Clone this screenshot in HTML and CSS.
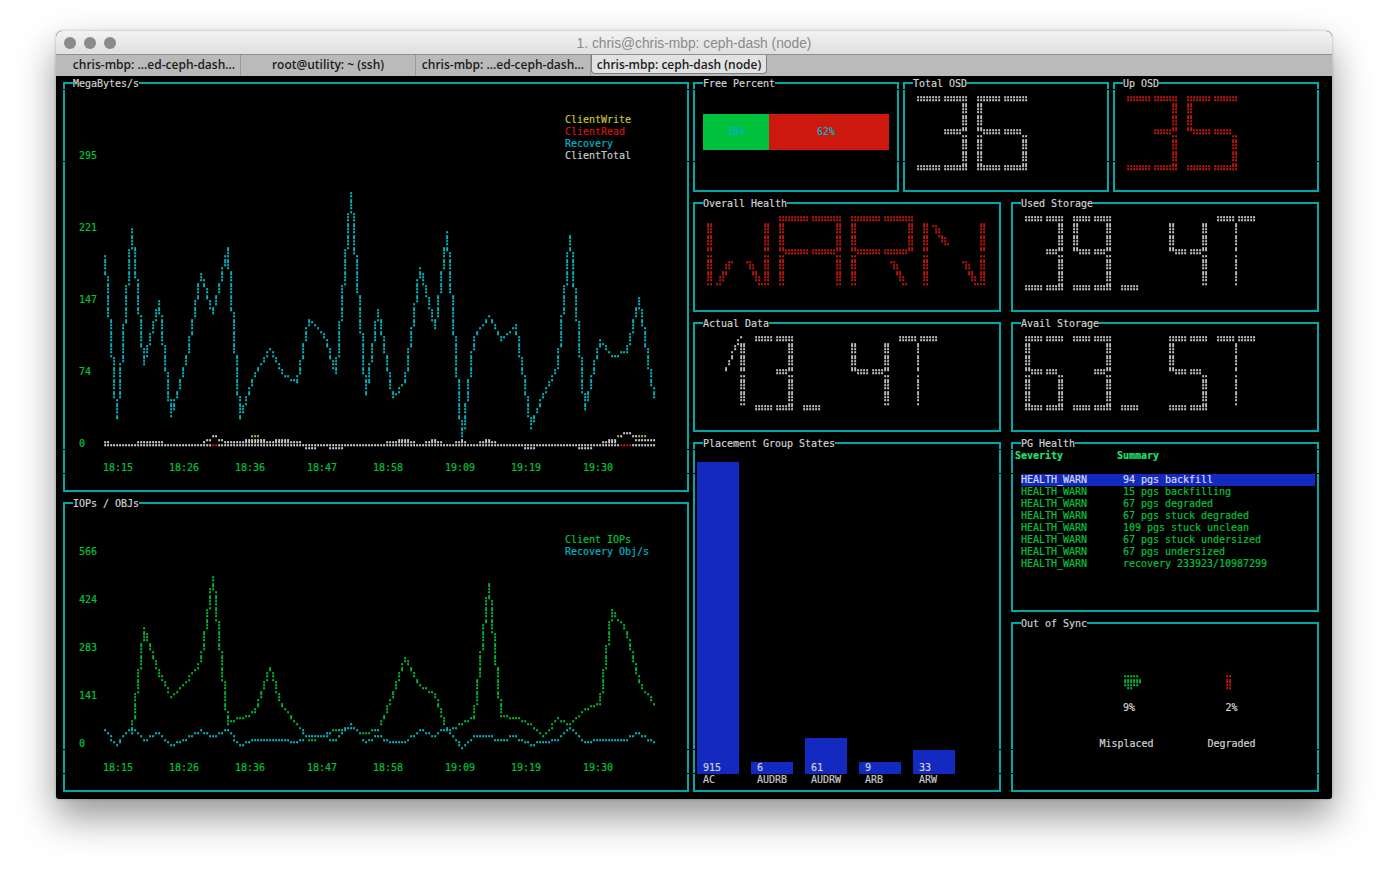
FILE: index.html
```html
<!DOCTYPE html>
<html lang="en">
<head>
  <meta charset="UTF-8" />
  <title>ceph-dash (node)</title>
  <link rel="stylesheet" href="styles.css">
</head>
<body>
  <div class="window">
    <header class="titlebar">
      <div class="lights"><i></i><i></i><i></i></div>
      <div class="title">1. chris@chris-mbp: ceph-dash (node)</div>
    </header>
    <nav class="tabs">
      <div class="tab">chris-mbp: ...ed-ceph-dash...</div>
      <div class="tab">root@utility: ~ (ssh)</div>
      <div class="tab">chris-mbp: ...ed-ceph-dash...</div>
      <div class="tab active">chris-mbp: ceph-dash (node)</div>
    </nav>

    <!-- terminal: 210 x 60 cells of 6 x 12 px -->
    <main class="term">
      <div class="seams"><i class="s1"></i><i class="s2"></i><i class="s3"></i><i class="s4"></i><i class="s5"></i><i class="s6"></i></div>

      <section class="panel p-mb">
        <h2>MegaBytes/s</h2>
        <div class="chart">
          <div class="yaxis y-mb"><span>295</span><span>221</span><span>147</span><span>74</span><span>0</span></div>
          <div class="plot">
            <ul class="legend">
              <li class="yellow">ClientWrite</li>
              <li class="red">ClientRead</li>
              <li class="cyan">Recovery</li>
              <li class="white">ClientTotal</li>
            </ul>
            <pre class="dots plot-mb" id="mb"></pre>
          </div>
        </div>
        <pre class="xaxis">18:15      18:26      18:36       18:47      18:58       19:09      19:19       19:30</pre>
      </section>

      <section class="panel p-iops">
        <h2>IOPs / OBJs</h2>
        <div class="chart">
          <div class="yaxis y-iops"><span>566</span><span>424</span><span>283</span><span>141</span><span>0</span></div>
          <div class="plot">
            <ul class="legend">
              <li class="green">Client IOPs</li>
              <li class="cyan">Recovery Obj/s</li>
            </ul>
            <pre class="dots plot-iops" id="iops"></pre>
          </div>
        </div>
        <pre class="xaxis">18:15      18:26      18:36       18:47      18:58       19:09      19:19       19:30</pre>
      </section>

      <section class="panel p-free">
        <h2>Free Percent</h2>
        <div class="stack">
          <div class="seg seg-free">38%</div>
          <div class="seg seg-used">62%</div>
        </div>
      </section>

      <section class="panel p-total">
        <h2>Total OSD</h2>
        <pre class="dots lcd white" id="lcd-total" aria-label="36"></pre>
      </section>

      <section class="panel p-up">
        <h2>Up OSD</h2>
        <pre class="dots lcd red" id="lcd-up" aria-label="35"></pre>
      </section>

      <section class="panel p-health">
        <h2>Overall Health</h2>
        <pre class="dots lcd red" id="lcd-health" aria-label="WARN"></pre>
      </section>

      <section class="panel p-used">
        <h2>Used Storage</h2>
        <pre class="dots lcd white" id="lcd-used" aria-label="39.4T"></pre>
      </section>

      <section class="panel p-actual">
        <h2>Actual Data</h2>
        <pre class="dots lcd white" id="lcd-actual" aria-label="13.4T"></pre>
      </section>

      <section class="panel p-avail">
        <h2>Avail Storage</h2>
        <pre class="dots lcd white" id="lcd-avail" aria-label="63.5T"></pre>
      </section>

      <section class="panel p-pg">
        <h2>Placement Group States</h2>
        <div class="bars">
          <div class="bar-col"><div class="bar" style="height:312px">915</div><div class="bar-label">AC</div></div>
          <div class="bar-col"><div class="bar" style="height:12px">6</div><div class="bar-label">AUDRB</div></div>
          <div class="bar-col"><div class="bar" style="height:36px">61</div><div class="bar-label">AUDRW</div></div>
          <div class="bar-col"><div class="bar" style="height:12px">9</div><div class="bar-label">ARB</div></div>
          <div class="bar-col"><div class="bar" style="height:24px">33</div><div class="bar-label">ARW</div></div>
        </div>
      </section>

      <section class="panel p-table">
        <h2>PG Health</h2>
        <div class="thead"><span>Severity</span><span>Summary</span></div>
        <ul class="rows">
          <li class="selected"><span>HEALTH_WARN</span><span>94 pgs backfill</span></li>
          <li><span>HEALTH_WARN</span><span>15 pgs backfilling</span></li>
          <li><span>HEALTH_WARN</span><span>67 pgs degraded</span></li>
          <li><span>HEALTH_WARN</span><span>67 pgs stuck degraded</span></li>
          <li><span>HEALTH_WARN</span><span>109 pgs stuck unclean</span></li>
          <li><span>HEALTH_WARN</span><span>67 pgs stuck undersized</span></li>
          <li><span>HEALTH_WARN</span><span>67 pgs undersized</span></li>
          <li><span>HEALTH_WARN</span><span>recovery 233923/10987299</span></li>
        </ul>
      </section>

      <section class="panel p-sync">
        <h2>Out of Sync</h2>
        <div class="gauges">
          <div class="gauge">
            <pre class="dots blob blob-mis" id="blob-mis"></pre>
            <div class="pct pct-mis">9%</div>
            <div class="gauge-name">Misplaced</div>
          </div>
          <div class="gauge">
            <pre class="dots blob blob-deg" id="blob-deg"></pre>
            <div class="pct">2%</div>
            <div class="gauge-name">Degraded</div>
          </div>
        </div>
      </section>
    </main>
  </div>
  <script src="dash.js"></script>
</body>
</html>
```

FILE: styles.css
```css
/* ─── page & window ─────────────────────────── */
*,*::before,*::after{box-sizing:border-box;margin:0;padding:0}
html,body{width:100%;height:100%;overflow:hidden;background:#fff}
body{padding:31px 56px 0}

.window{
  width:1276px;height:768px;border-radius:6px 6px 3px 3px;overflow:hidden;
  box-shadow:0 18px 38px rgba(0,0,0,.42),0 0 3px rgba(0,0,0,.25);
  display:flex;flex-direction:column;background:#000;
}

.titlebar{
  height:23px;flex:none;display:flex;align-items:center;position:relative;
  background:linear-gradient(#f3f3f3,#dfdfdf);
}
.lights{display:flex;gap:8px;padding-left:8px}
.lights i{width:12px;height:12px;border-radius:50%;background:#8b8b8b}
.title{
  position:absolute;left:0;right:0;padding-top:1px;text-align:center;
  font:13.8px "Liberation Sans",Arial,sans-serif;color:#8a8a8a;
}

.tabs{
  height:22px;flex:none;display:flex;background:#bababa;
  border-top:1px solid #8f8f8f;
  font:600 12px "Open Sans","Liberation Sans",sans-serif;color:#1c1c1c;
}
.tab{
  width:175px;padding-bottom:2px;display:flex;align-items:center;justify-content:center;
  border-right:1px solid #9b9b9b;white-space:nowrap;
}
.tab:first-child{width:185px;padding-left:12px}
.tab.active{
  background:#e2e2e2;border:1px solid #7e7e7e;border-top:0;
  border-radius:0 0 4px 4px;height:19px;width:176px;padding-bottom:0;
}

/* ─── terminal grid ─────────────────────────── */
.term{
  flex:1;position:relative;padding:2px 0 0 5px;
  display:grid;grid-template-columns:repeat(210,6px);grid-template-rows:repeat(60,12px);
  font:10px/12px "DejaVu Sans Mono","Liberation Mono",monospace;letter-spacing:-.02px;
  color:#c7c7c7;-webkit-text-stroke:.2px;
}
.term pre{font:inherit;letter-spacing:inherit}

/* the box drawing glyphs don't quite join on a few rows */
.seams i{position:absolute;left:0;right:0;height:1px;background:#000;z-index:1}
.seams .s1{top:13px}
.seams .s2{top:85px}
.seams .s3{top:373px}
.seams .s4{top:397px}
.seams .s5{top:673px}
.seams .s6{top:697px}

.panel{
  position:relative;margin:4px 2px 6px;padding:6px 2px 4px;
  border:2px solid #00a8a8;
}
.panel > *{position:relative;z-index:2}
.panel h2{
  position:absolute;left:8px;top:-6px;height:12px;background:#000;
  font:inherit;color:#d0d0d0;white-space:nowrap;
}

.p-mb{grid-column:1/106;grid-row:1/36}
.p-iops{grid-column:1/106;grid-row:36/61}
.p-free{grid-column:106/141;grid-row:1/11}
.p-total{grid-column:141/176;grid-row:1/11}
.p-up{grid-column:176/211;grid-row:1/11}
.p-health{grid-column:106/158;grid-row:11/21}
.p-used{grid-column:159/211;grid-row:11/21}
.p-actual{grid-column:106/158;grid-row:21/31}
.p-avail{grid-column:159/211;grid-row:21/31}
.p-pg{grid-column:106/158;grid-row:31/61}
.p-table{grid-column:159/211;grid-row:31/46}
.p-sync{grid-column:159/211;grid-row:46/61}

/* ─── colours ───────────────────────────────── */
.white{color:#c7c7c7}
.red{color:#cc180e}
.green{color:#00c13b}
.yellow{color:#c7c42a}
.cyan{color:#00b4c4}

/* braille comes from a fallback font with a 7px advance;
   own layer so the dots get grey antialiasing, no colour fringes */
.term pre.dots{
  white-space:pre;line-height:12px;letter-spacing:-1px;
  -webkit-text-stroke:.35px;will-change:transform;
}
.dots .white{color:#d4d4d4}
.dots .cyan{color:#00c0c6}

/* ─── line charts ───────────────────────────── */
.chart{display:flex}
.yaxis{width:36px;padding-left:12px;display:flex;flex-direction:column;color:#00c13b}
.yaxis span{height:12px}
.y-mb{padding-top:60px;gap:60px}
.y-iops{padding-top:36px;gap:36px}
.plot-mb{height:288px}
.plot-iops{height:192px}
.xaxis{margin:12px 0 0 36px;color:#00c13b;white-space:pre}

.legend{margin:24px 0 0 462px;list-style:none}
.legend li{height:12px;white-space:nowrap}

/* ─── free percent ──────────────────────────── */
.stack{display:flex;margin:24px 0 0 6px;width:186px;height:36px;color:#00b4c4}
.seg{display:flex;align-items:center;justify-content:center}
.seg-free{width:66px;background:#00c13b}
.seg-used{flex:1;padding-right:6px;background:#cc180e}

/* ─── bar chart ─────────────────────────────── */
.bars{display:flex;gap:12px;height:336px;align-items:flex-end}
.bar-col{width:42px;display:flex;flex-direction:column}
.bar{background:#1429c0;padding-left:6px;display:flex;align-items:flex-end;color:#d0d0d0}
.bar-label{height:12px;padding-left:6px;white-space:nowrap}

/* ─── table ─────────────────────────────────── */
.thead{display:flex;font-weight:bold;color:#25df6d;height:24px}
.thead span:first-child{width:102px}
.rows{list-style:none;color:#00c13b}
.rows li{display:flex;margin-left:6px;height:12px;white-space:pre}
.rows li span:first-child{width:102px}
.rows li.selected{background:#1429c0;color:#d8d8e8}

/* ─── gauges ────────────────────────────────── */
.gauges{display:flex;padding:36px 0 0 59px}
.gauge{width:105px;text-align:center;color:#d0d0d0}
.blob{height:24px;margin-bottom:12px;text-align:left}
.blob-mis{padding-left:49px}
.blob-deg{padding-left:46px}
.pct{height:12px;margin-bottom:24px}
.pct-mis{padding-left:5px}
```

FILE: dash.js
```js
// every chart here is braille text, 2 x 4 dots a cell, like the terminal draws it
class Dots {
  constructor(cols, rows) {
    this.cols = cols; this.rows = rows;
    this.mask = new Uint8Array(cols * rows);
    this.tint = new Array(cols * rows).fill('');
  }
  set(x, y, tint = '') {
    const cx = x >> 1, cy = y >> 2;
    if (x < 0 || y < 0 || cx >= this.cols || cy >= this.rows) return;
    const bit = [[0x01, 0x08], [0x02, 0x10], [0x04, 0x20], [0x40, 0x80]][y & 3][x & 1];
    this.mask[cy * this.cols + cx] |= bit;
    if (tint) this.tint[cy * this.cols + cx] = tint;
  }
  vrun(x, y0, y1, tint) { for (let y = y0; y <= y1; y++) this.set(x, y, tint); }
  hrun(x0, x1, y, tint) { for (let x = x0; x <= x1; x++) this.set(x, y, tint); }
  line(x0, y0, x1, y1, tint) {
    const n = Math.max(Math.abs(x1 - x0), Math.abs(y1 - y0));
    for (let i = 0; i <= n; i++) {
      this.set(Math.round(x0 + (x1 - x0) * i / n), Math.round(y0 + (y1 - y0) * i / n), tint);
    }
  }
  render(el) {
    el.textContent = '';
    for (let r = 0; r < this.rows; r++) {
      let run = '', runTint = '';
      const flush = () => {
        if (!run) return;
        if (runTint) {
          const s = document.createElement('span');
          s.className = runTint; s.textContent = run; el.append(s);
        } else el.append(run);
        run = '';
      };
      // no trailing blanks, the rest of the row stays empty
      let last = this.cols - 1;
      while (last >= 0 && !this.mask[r * this.cols + last]) last--;
      for (let c = 0; c <= last; c++) {
        const i = r * this.cols + c;
        const tint = this.mask[i] ? this.tint[i] : runTint;
        if (tint !== runTint) { flush(); runTint = tint; }
        run += String.fromCharCode(0x2800 + this.mask[i]);
      }
      flush();
      if (r < this.rows - 1) el.append('\n');
    }
  }
}

// series are traced from the screenshot at 3x: "a-b" a column's run, "a*n" repeats
function parse(str) {
  const out = [];
  for (const t of str.trim().split(/\s+/)) {
    const [v, n] = t.split('*');
    const [a, b] = v.split('-').map(Number);
    for (let i = 0; i < (n || 1); i++) out.push([a, b === undefined ? a : b]);
  }
  return out;
}

// 3x screenshot y to dot row; a dot sits 1.5px into its 3px row
const dotRow = (z, yOff) => Math.round((z / 3 + yOff - 1.5) / 3);

function plot(cv, str, startCol, yOff, tint) {
  parse(str).forEach(([a, b], i) => {
    cv.vrun(startCol + i, dotRow(a, yOff), dotRow(b, yOff), tint);
  });
}

const zcol = zx => Math.round((zx - 137) / 9);

// ─── MegaBytes/s ─────────────────────────────
const MB_RECOVERY = `228-285 292-408 418-528 532-655 660-716 550-655 435-545 318-428 210-312 147-205
 200-295 298-402 408-500 505-553 497-530 462-490 425-457 390-420 362-400 408-492 497-572 578-660 665-708
 658-690 632-652 597-625 560-590 525-555 470-518 417-463 362-408 308-355 282-300 300-320 325-357 362-385
 380-400 345-375 310-335 265-300 228-260 200-265 272-392 398-518 525-645 650-715 678-698 652-672 625-645
 598-617 578-590 562-572 552 535-545 515-525 507 515-525 535-545 553-562 570-580 588 588 598 598 590-606
 545-580 490-535 445-482 420-438 425 432 442 450 462-470 480-500 508-535 545-562 535-580 428-525 318-420
 210-310 100-205 40-95 100-220 228-335 345-455 462-580 588-645 552-610 490-545 425-482 390-420
 418-465 470-518 525-572 578-625 632-655 645 625-635 615 578-605 505-572 442-500 372-435 298-365 265-295
 282-312 318-345 352-385 390-418 418-445 345-410 272-338 200-265 155-212 218-338 345-465 470-590 597-715
 722-772 670-745 597-662 515-590 470-508 452-462 445 435 418-425 408 415-428 435-445 452-462 470-480 470
 462 452 445 435-465 470-528 535-580 588-645 650-708 715-745 705-725 688-698 660-680 642-652 625-635
 605-617 588-598 570-580 508-562 408-500 318-400 220-312 165-212 218-320 328-418 425-527 533-635 642-690
 635-662 588-625 542-580 508-535 480-500 490 500-508 516 526 526 526 516 516 498-516 462-490 418-455
 382-408 352-382 390-437 443-500 508-563 570-618 622-655`;

// [from, to, y], columns in 3x screenshot px
const Z8 = 930;
const MB_TOTAL = [
  [137, 853 + Z8, 796],
  [135, 150, 788], [232, 310, 788], [435, 435, 788], [497, 610, 788], [620, 640, 788], [650, 725, 788],
  [443, 452, 778], [479, 488, 778], [560, 610, 778], [650, 690, 778], [461, 470, 769],
  [740, 770, 805], [810, 850, 805],
  [50 + Z8, 135 + Z8, 788], [170 + Z8, 215 + Z8, 788], [258 + Z8, 285 + Z8, 788],
  [330 + Z8, 376 + Z8, 788], [700 + Z8, 735 + Z8, 788],
  [88 + Z8, 115 + Z8, 778], [187 + Z8, 195 + Z8, 778], [277 + Z8, 277 + Z8, 778],
  [349 + Z8, 358 + Z8, 778], [718 + Z8, 735 + Z8, 778], [799 + Z8, 853 + Z8, 778],
  [745 + Z8, 754 + Z8, 769], [790 + Z8, 799 + Z8, 769], [763 + Z8, 780 + Z8, 760],
  [467 + Z8, 493 + Z8, 805], [628 + Z8, 665 + Z8, 805],
];
const MB_YELLOW = [[578, 596, 769], [745 + Z8, 745 + Z8, 769], [808 + Z8, 826 + Z8, 769]];
const MB_RED = [[461, 470, 796], [754 + Z8, 781 + Z8, 796]];

{
  // plot starts at cell column 7, cell row 7 (y = 162)
  const cv = new Dots(92, 24);
  const yOff = 180 - 162;
  plot(cv, MB_RECOVERY, 0, yOff, 'cyan');
  const ranges = (list, tint) => list.forEach(([a, b, y]) => {
    cv.hrun(zcol(a), zcol(b), dotRow(y, yOff), tint);
  });
  ranges(MB_TOTAL, 'white');
  ranges(MB_YELLOW, 'yellow');
  ranges(MB_RED, 'red');
  cv.render(document.getElementById('mb'));
}

// ─── IOPs / OBJs ─────────────────────────────
const IO_CLIENT = `480-495 400-478 328-395 250-322 205-240 222-240 248-270 275-298 302-325 330-345 348-362
 365-378 382-398 408 403 394 385 376 367 348-360 338 330 312-325 275-305 212-270 150-205 88-145 50-85 95-180
 185-270 275-360 365-450 455-492 484 484 475*3 466 466 457 445-457 420-440 392-412 365-385 338-360 322-335
 338-360 365-395 402-420 430-440 448 457 466-475 484 493 502 510-520 528 538*3 528*3 520 520 511*4 502*4 511
 520*4 511*3
 484-492 466-478 438-460 420-432 394-412 366-385 338-360 312-332 294-305 302-312 320-335 338-350 357-368 375
 384 384 394 394 402-412 420-440 446-466 475-492 502 511 502 502 492 492 484 484 475 438-475 358-430 275-350
 195-268 113-188 70-118 122-215 222-312 320-412 420-465 466 466 475*4 484 484 492 492 502 511 520 528 520 511
 492-502 484 475 484 484 492 492 484 475 466 457 448 448 439 439 430 402-430 330-395 258-322 185-250 150-182
 158-170 178 187 195-205 212-235 240-270 275-305 312-342 348-370 375-385 394 402 410-422 430`;

const IO_RECOVERY = `511 520 528-538 547 556 538-547 528 520 511 502-520 511 520 528 538 538 528 528 520 520 528
 538 547 556 556 547 547 538 538 528 528 520 520 511 520 520 528*3 520 520 511 511 520 528-538 547 556 556 547
 547 538*13 547*3 538 538 528*7 520-528 538*3 528 520 502-511 502 493 502 511 520 538 547 538 538 528 528
 528 538 538 547*6 538 528 528 520 511 511 520 520 528 528 520 511 511 502-511 520 528 538 547-556 565 556 547
 538 528*7 538*5 528*3 538 538 547 547 556 556 547*5 538*3 528 520 511 502 511 520 528 538 547*3 538*12 528 528
 520 520 528 528 538 538 547`;

{
  // cell row 40 (y = 558)
  const cv = new Dots(92, 16);
  const yOff = 560 - 558;
  plot(cv, IO_CLIENT, 9, yOff, 'green');
  plot(cv, IO_RECOVERY, 0, yOff, 'cyan');
  cv.render(document.getElementById('iops'));
}

// ─── big LCD letters ─────────────────────────
const SEGS = {
  '1': 'b c up', '3': 'a1 a2 b c d1 d2 g2', '4': 'f b c g1 g2',
  '5': 'a1 a2 f g1 g2 c d1 d2', '6': 'a1 a2 f e g1 g2 c d1 d2', '9': 'a1 a2 f b c g1 g2 d1 d2',
  'T': 'a1 a2 mt mb', 'W': 'f e b c ll lr', 'A': 'a1 a2 f e b c g1 g2', 'R': 'a1 a2 f e b g1 g2 lr',
  'N': 'f e b c ul lr', '.': 'dot',
};

function lcdChar(cv, ch, ox, oy, w, h) {
  const hm = h >> 1, cx = w >> 1;
  const H = (x0, x1, y) => { cv.hrun(ox + x0, ox + x1, oy + y); cv.hrun(ox + x0, ox + x1, oy + y + 1); };
  const V = (x, y0, y1) => { cv.vrun(ox + x, oy + y0, oy + y1); cv.vrun(ox + x + 1, oy + y0, oy + y1); };
  const D = (x0, y0, x1, y1) => {
    cv.line(ox + x0, oy + y0, ox + x1, oy + y1);
    cv.line(ox + x0 + 1, oy + y0, ox + x1 + 1, oy + y1);
  };
  const dl = Math.round(w * .15), dm = Math.round(w * .32), dn = Math.round(w * .62), dr = Math.round(w * .82);
  const draw = {
    a1: () => H(0, cx - 1, 0), a2: () => H(cx + 1, w - 1, 0),
    d1: () => H(0, cx - 1, h - 2), d2: () => H(cx + 1, w - 1, h - 2),
    f: () => V(0, 2, hm - 1), e: () => V(0, hm + 1, h - 3),
    b: () => V(w - 2, 2, hm - 1), c: () => V(w - 2, hm + 1, h - 3),
    g1: () => H(2, cx - 1, hm - 1), g2: () => H(cx + 1, w - 3, hm - 1),
    mt: () => cv.vrun(ox + cx, oy + 2, oy + hm - 1), mb: () => cv.vrun(ox + cx, oy + hm + 1, oy + h - 3),
    ul: () => D(dl, 3, dm, hm - 3), lr: () => D(dn, hm + 3, dr, h - 3),
    ll: () => D(dm, hm + 3, dl, h - 3),
    up: () => { cv.line(ox + w - 3, oy + 1, ox + w - 7, oy + 11); cv.set(ox + w - 2, oy); },
    dot: () => H(0, 5, h - 2),
  };
  SEGS[ch].split(' ').forEach(s => draw[s]());
}

function lcd(id, text, w, pitch, cols) {
  const cv = new Dots(cols, 8);
  [...text].forEach((ch, i) => lcdChar(cv, ch, 3 + i * pitch, 2, w, 25));
  cv.render(document.getElementById(id));
}

lcd('lcd-total', '36', 17, 20, 33);
lcd('lcd-up', '35', 17, 20, 33);
lcd('lcd-health', 'WARN', 21, 24, 50);
lcd('lcd-used', '39.4T', 13, 16, 50);
lcd('lcd-actual', '13.4T', 13, 16, 50);
lcd('lcd-avail', '63.5T', 13, 16, 50);

// ─── out of sync blobs ───────────────────────
function blob(id, rows, cols, tint) {
  const cv = new Dots(cols, 2);
  rows.forEach((r, y) => [...r].forEach((c, x) => { if (c === '#') cv.set(x, y + 3, tint); }));
  cv.render(document.getElementById(id));
}
blob('blob-mis', ['#####.', '######', '######', '#####.', '.##...'], 3, 'green');
blob('blob-deg', ['##', '##', '##', '##', '##'], 1, 'red');
```
